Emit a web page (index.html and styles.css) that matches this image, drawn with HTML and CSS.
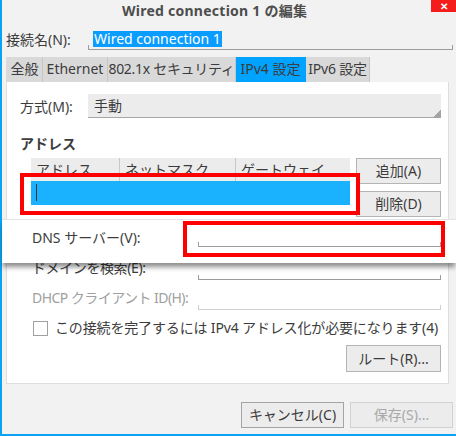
FILE: index.html
```html
<!DOCTYPE html>
<html lang="ja">
<head>
<meta charset="utf-8">
<title>Wired connection 1 の編集</title>
<link rel="stylesheet" href="styles.css">
</head>
<body>
<div class="window">
  <div class="titlebar">
    <span class="title">Wired connection 1 の編集</span>
    <span class="close">✕</span>
  </div>

  <div class="name-row">
    <span class="name-label">接続名(N):</span>
    <div class="name-field"><span class="selected">Wired connection 1</span></div>
  </div>

  <div class="tabs">
    <span class="tab tab-general">全般</span>
    <span class="tab tab-ethernet">Ethernet</span>
    <span class="tab tab-security">802.1x セキュリティ</span>
    <span class="tab tab-ipv4 active">IPv4 設定</span>
    <span class="tab tab-ipv6">IPv6 設定</span>
  </div>

  <div class="panel">
    <div class="method-row">
      <span class="method-label">方式(M):</span>
      <div class="combo">手動</div>
    </div>

    <div class="section-title">アドレス</div>

    <div class="addr">
      <div class="addr-table">
        <div class="addr-head">
          <span class="col col-addr">アドレス</span>
          <span class="col col-mask">ネットマスク</span>
          <span class="col col-gw">ゲートウェイ</span>
        </div>
        <div class="addr-row"><span class="caret"></span></div>
      </div>
      <div class="addr-buttons">
        <div class="btn">追加(A)</div>
        <div class="btn">削除(D)</div>
      </div>
      <div class="mark mark-addr"></div>
    </div>

    <div class="strip">
      <div class="form-row dns-row">
        <span class="form-label">DNS サーバー(V):</span>
        <div class="field"></div>
      </div>
      <div class="mark mark-dns"></div>
    </div>

    <div class="form-row domain-row">
      <span class="form-label label-domain">ドメインを検索(E):</span>
      <div class="field"></div>
    </div>

    <div class="form-row dhcp-row">
      <span class="form-label disabled label-dhcp">DHCP クライアント ID(H):</span>
      <div class="field field-disabled"></div>
    </div>

    <div class="check-row">
      <span class="checkbox"></span>
      <span class="check-label">この接続を完了するには IPv4 アドレス化が必要になります(4)</span>
    </div>

    <div class="route-row">
      <div class="btn btn-route">ルート(R)...</div>
    </div>
  </div>

  <div class="footer">
    <div class="btn btn-footer">キャンセル(C)</div>
    <div class="btn btn-footer btn-disabled">保存(S)...</div>
  </div>
</div>
</body>
</html>
```

FILE: styles.css
```css
* { box-sizing: border-box; }

html, body {
  margin: 0;
  padding: 0;
}

body {
  width: 456px;
  height: 436px;
  overflow: hidden;
  background: #f2f2f2;
  font-family: "Noto Sans", "Noto Sans CJK JP", sans-serif;
  font-size: 14px;
  color: #3c3c3c;
}

.window {
  width: 456px;
  height: 436px;
  border-left: 2px solid #0aa2f2;
  border-bottom: 2px solid #0aa2f2;
  display: flex;
  flex-direction: column;
}

/* title bar */
.titlebar {
  height: 21px;
  display: flex;
  align-items: flex-start;
}

.title {
  padding-left: 120px;
  line-height: 21px;
  font-weight: bold;
  letter-spacing: 0.25px;
  color: #4d4d4d;
  white-space: nowrap;
}

.close {
  margin-left: auto;
  width: 25px;
  height: 12px;
  background: #f51c1c;
  color: #fff;
  font-size: 10px;
  font-weight: bold;
  line-height: 12px;
  text-align: center;
}

/* connection name */
.name-row {
  margin-top: 7px;
  padding-left: 4px;
  height: 24px;
  display: flex;
  align-items: flex-start;
}

.name-label {
  width: 82px;
  line-height: 24px;
}

.name-field {
  width: 365px;
  height: 22px;
  padding-left: 5px;
  display: flex;
  align-items: center;
  border-bottom: 1px solid #9c9c9c;
  background:
    linear-gradient(#9c9c9c, #9c9c9c) left bottom / 1px 4px no-repeat,
    linear-gradient(#9c9c9c, #9c9c9c) right bottom / 1px 4px no-repeat;
}

.selected {
  background: #0a9cff;
  color: #fff;
  line-height: 16px;
  padding: 0 1px;
  white-space: nowrap;
}

/* tabs */
.tabs {
  margin-top: 5px;
  padding-left: 4px;
  height: 25px;
  display: flex;
}

.tab {
  flex: none;
  height: 25px;
  line-height: 24px;
  text-align: center;
  background: #d9d9d9;
  border-right: 1px solid #c6c6c6;
  white-space: nowrap;
  overflow: hidden;
}

.tab-general { width: 37px; border-left: 1px solid #dcdcdc; }
.tab-ethernet { width: 65px; }
.tab-security { width: 128px; letter-spacing: -0.3px; }
.tab-ipv4 { width: 70px; }
.tab-ipv6 { width: 64px; letter-spacing: -0.2px; }

.tab.active {
  background: #00a3ff;
  border-right-color: #00a3ff;
}

/* panel */
.panel {
  margin-left: 4px;
  width: 443px;
  height: 302px;
  background: #fff;
  border: 1px solid #dedede;
  border-top: none;
  display: flex;
  flex-direction: column;
}

.method-row {
  margin-top: 12px;
  padding-left: 13px;
  height: 24px;
  display: flex;
  align-items: center;
}

.method-label {
  width: 68px;
}

.combo {
  width: 353px;
  height: 24px;
  line-height: 23px;
  padding-left: 6px;
  background:
    linear-gradient(to top left, #a3a3a3 50%, transparent 50%) right bottom / 7px 7px no-repeat,
    #ececec;
  border-bottom: 1px solid #a6a6a6;
}

.section-title {
  margin-top: 16px;
  padding-left: 13px;
  line-height: 20px;
  font-weight: bold;
}

/* address table */
.addr {
  position: relative;
  margin-top: 4px;
  padding-left: 24px;
  height: 59px;
  display: flex;
  gap: 6px;
}

.addr-table {
  width: 319px;
}

.addr-head {
  height: 23px;
  display: flex;
  background: #ececec;
}

.col {
  line-height: 23px;
  padding-left: 5px;
  white-space: nowrap;
  overflow: hidden;
}

.col-addr { width: 89px; border-right: 1px solid #c8c8c8; }
.col-mask { width: 116px; border-right: 1px solid #c8c8c8; }
.col-gw { width: 114px; }

.addr-row {
  height: 24px;
  background: #1ab1ff;
  padding: 3px 0 0 5px;
}

.caret {
  display: block;
  width: 1px;
  height: 17px;
  background: #333;
}

.addr-buttons {
  width: 85px;
  display: flex;
  flex-direction: column;
  gap: 7px;
}

.btn {
  height: 26px;
  line-height: 24px;
  text-align: center;
  background: #ececec;
  border: 1px solid #b4b4b4;
  white-space: nowrap;
}

/* red annotation marks */
.mark {
  position: absolute;
  border: 4px solid #fe0000;
  pointer-events: none;
}

.mark-addr {
  left: 13px;
  top: 15px;
  width: 340px;
  height: 42px;
}

.mark-dns {
  left: 181px;
  top: 1px;
  width: 262px;
  height: 36px;
}

/* raised strip */
.strip {
  position: relative;
  z-index: 1;
  margin: 2px -8px 0 -5px;
  padding: 6px 0 13px 30px;
  background: #fff;
  border-top: 1px solid #e4e4e4;
  box-shadow: 0 5px 5px -1px rgba(0, 0, 0, 0.45);
}

/* form rows */
.form-row {
  height: 22px;
  display: flex;
  align-items: flex-start;
}

.dns-row {
  height: 24px;
  align-items: center;
}

.form-label {
  width: 166px;
  line-height: 20px;
  white-space: nowrap;
}

.form-label.disabled {
  color: #a0a0a0;
}

.label-domain {
  letter-spacing: -0.4px;
}

.label-dhcp {
  letter-spacing: -0.55px;
}

.field {
  width: 243px;
  height: 22px;
  border-bottom: 1px solid #9c9c9c;
  background:
    linear-gradient(#9c9c9c, #9c9c9c) left bottom / 1px 4px no-repeat,
    linear-gradient(#9c9c9c, #9c9c9c) right bottom / 1px 4px no-repeat;
}

.dns-row .field {
  height: 18px;
}

.field-disabled {
  border-bottom-color: #d0d0d0;
  background:
    linear-gradient(#d0d0d0, #d0d0d0) left bottom / 1px 4px no-repeat,
    linear-gradient(#d0d0d0, #d0d0d0) right bottom / 1px 4px no-repeat;
}

.domain-row,
.dhcp-row {
  padding-left: 25px;
}

.domain-row {
  margin-top: -5px;
}

.dhcp-row {
  margin-top: 8px;
}

/* checkbox */
.check-row {
  margin-top: 8px;
  padding-left: 26px;
  height: 20px;
  display: flex;
  align-items: center;
  gap: 7px;
}

.checkbox {
  width: 15px;
  height: 15px;
  border: 1px solid #a0a0a0;
  background: #fff;
}

.check-label {
  line-height: 20px;
  letter-spacing: -0.15px;
  white-space: nowrap;
}

/* route button */
.route-row {
  margin-top: 7px;
  padding-right: 7px;
  display: flex;
  justify-content: flex-end;
}

.btn-route {
  width: 95px;
  height: 27px;
  line-height: 25px;
}

/* footer */
.footer {
  margin-top: 18px;
  padding-right: 3px;
  display: flex;
  justify-content: flex-end;
  gap: 6px;
}

.btn-footer {
  width: 103px;
  border-color: #a4a4a4;
}

.btn-disabled {
  color: #a8a8a8;
  border-color: #d2d2d2;
}
```
